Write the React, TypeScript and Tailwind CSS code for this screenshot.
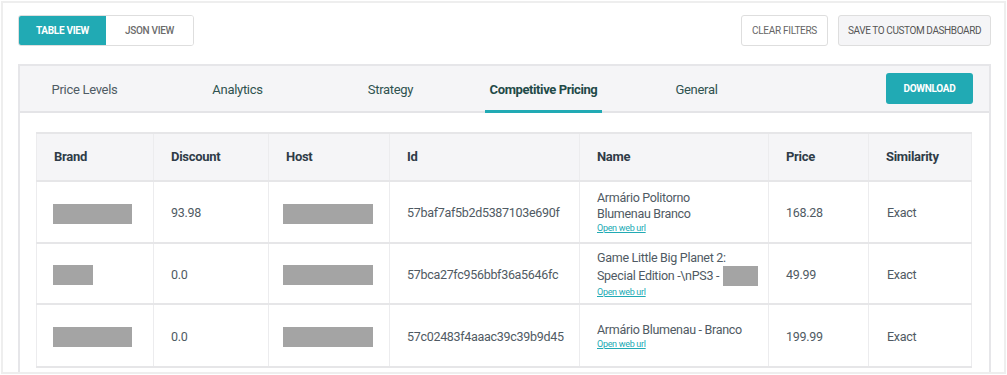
import { ReactNode } from 'react'

const teal = 'bg-[#21aab4]'

type Row = {
  brand: number
  discount: string
  id: string
  name: ReactNode
  price: string
  h: string
}

const rows: Row[] = [
  {
    brand: 79,
    discount: '93.98',
    id: '57baf7af5b2d5387103e690f',
    name: (
      <>
        <span className="block">Armário Politorno</span>
        <span className="block">Blumenau Branco</span>
      </>
    ),
    price: '168.28',
    h: 'h-[62px]',
  },
  {
    brand: 40,
    discount: '0.0',
    id: '57bca27fc956bbf36a5646fc',
    name: (
      <>
        <span className="block">Game Little Big Planet 2:</span>
        <span className="flex items-center">
          Special Edition -\nPS3 -
          <span className="ml-[4px] inline-block h-[20px] w-[35px] bg-[#a4a4a4]" />
        </span>
      </>
    ),
    price: '49.99',
    h: 'h-[61px]',
  },
  {
    brand: 79,
    discount: '0.0',
    id: '57c02483f4aaac39c39b9d45',
    name: <span className="block">Armário Blumenau - Branco</span>,
    price: '199.99',
    h: 'h-[63px]',
  },
]

const columns = [
  { label: 'Brand', w: 'w-[117px]' },
  { label: 'Discount', w: 'w-[115px]' },
  { label: 'Host', w: 'w-[121px]' },
  { label: 'Id', w: 'w-[190px]' },
  { label: 'Name', w: 'w-[189px]' },
  { label: 'Price', w: 'w-[100px]' },
  { label: 'Similarity', w: 'w-[103px]' },
]

const tabs = ['Price Levels', 'Analytics', 'Strategy', 'Competitive Pricing', 'General']

const cell = 'border-2 border-[#e6e6e8] border-x border-x-[#ececee]'

function Redacted({ w }: { w: number }) {
  return <span className="inline-block h-[20px] bg-[#a4a4a4] align-middle" style={{ width: w }} />
}

export default function App() {
  return (
    <div className="w-[1007px] h-[375px] overflow-hidden bg-white font-['Roboto',sans-serif] tracking-[-0.3px]">
      <div className="mx-[1px] mt-[1px] h-[373px] flex flex-col border-2 border-[#eeeeee] pl-[15px] pr-[13px] pt-[12px]">

        {/* toolbar */}
        <div className="flex justify-between h-[31px] shrink-0">
          <div className="flex rounded-[3px] border border-[#dedede] overflow-hidden">
            <button className={`${teal} w-[87px] text-[10px] font-bold uppercase text-white`}>Table View</button>
            <button className="w-[87px] bg-white text-[10px] font-medium uppercase text-[#6b6b6b]">JSON View</button>
          </div>
          <div className="flex gap-[10px]">
            <button className="w-[87px] rounded-[3px] border border-[#dedede] bg-white text-[10px] uppercase text-[#666]">
              Clear Filters
            </button>
            <button className="w-[153px] rounded-[3px] border border-[#dedede] bg-[#f5f5f7] text-[10px] uppercase tracking-[-0.4px] text-[#555]">
              Save to custom dashboard
            </button>
          </div>
        </div>

        {/* card */}
        <div className="mt-[18px] flex-1 overflow-hidden border-2 border-b-0 border-[#e6e6e9]">
          <div className="flex items-stretch justify-between h-[47px] bg-[#f5f5f7] border-b-2 border-[#e4e4e7]">
            <div className="flex ml-[-12px] -mb-[2px]">
              {tabs.map((t) => {
                const active = t === 'Competitive Pricing'
                return (
                  <div key={t} className="w-[153px] flex justify-center">
                    <span
                      className={`flex items-center px-[5px] pt-[3px] border-b-[3px] text-[13px] ${
                        active
                          ? 'border-[#21aab4] font-bold text-[#1f4a48] tracking-[-0.4px]'
                          : t === 'Price Levels'
                            ? 'border-transparent text-[#4f5b64]'
                            : 'border-transparent text-[#2f524f]'
                      }`}
                    >
                      {t}
                    </span>
                  </div>
                )
              })}
            </div>
            <div className="flex items-center pr-[16px]">
              <button className={`${teal} w-[87px] h-[31px] rounded-[3px] text-[10px] font-bold uppercase text-white`}>
                Download
              </button>
            </div>
          </div>

          <div className="pl-[16px] pr-[17px] pt-[19px]">
            <table className="border-collapse text-[12.5px] text-[#4f5a63]">
              <thead>
                <tr className="h-[48px] bg-[#f5f5f7]">
                  {columns.map((c) => (
                    <th key={c.label} className={`${c.w} ${cell} pl-[17px] text-left font-bold text-[13px] text-[#2f3c48]`}>
                      {c.label}
                    </th>
                  ))}
                </tr>
              </thead>
              <tbody>
                {rows.map((r) => (
                  <tr key={r.id} className={r.h}>
                    <td className={`${cell} pl-[16px] pt-[3px]`}>
                      <Redacted w={r.brand} />
                    </td>
                    <td className={`${cell} pl-[17px] pt-[3px]`}>{r.discount}</td>
                    <td className={`${cell} pl-[14px] pt-[3px]`}>
                      <Redacted w={90} />
                    </td>
                    <td className={`${cell} pl-[17px] pt-[3px] whitespace-nowrap`}>{r.id}</td>
                    <td className={`${cell} pl-[17px] leading-[16px] whitespace-nowrap`}>
                      {r.name}
                      <a className="block text-[9px] leading-[12px] text-[#21aab4] underline">Open web url</a>
                    </td>
                    <td className={`${cell} pl-[17px] pt-[3px]`}>{r.price}</td>
                    <td className={`${cell} pl-[18px] pt-[3px]`}>Exact</td>
                  </tr>
                ))}
              </tbody>
            </table>
          </div>
        </div>
      </div>
    </div>
  )
}
